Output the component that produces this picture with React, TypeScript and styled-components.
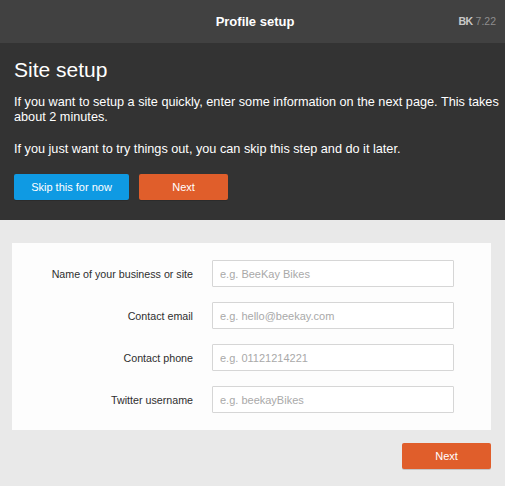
import React from "react";
import styled, { createGlobalStyle } from "styled-components";

const GlobalStyle = createGlobalStyle`
  html, body {
    margin: 0;
    padding: 0;
    background: #e9e9e9;
    font-family: "Liberation Sans", Arial, Helvetica, sans-serif;
  }
  * { box-sizing: border-box; }
`;

const Page = styled.div`
  width: 505px;
  min-height: 486px;
  background: #e9e9e9;
  display: flex;
  flex-direction: column;
`;

const TopBar = styled.header`
  height: 43px;
  background: #414141;
  display: grid;
  grid-template-columns: 1fr auto 1fr;
  align-items: center;
  padding: 0 9px 0 14px;
`;

const TopTitle = styled.h1`
  grid-column: 2;
  margin: 0;
  color: #ffffff;
  font-size: 13px;
  font-weight: bold;
  line-height: 1;
`;

const Version = styled.div`
  grid-column: 3;
  justify-self: end;
  font-size: 10.5px;
  color: #8e8e8e;
  margin-top: -2px;
  & b {
    color: #c9c9c9;
    font-weight: bold;
    margin-right: 3px;
    letter-spacing: -0.5px;
  }
`;

const Intro = styled.section`
  background: #333333;
  padding: 14px 4px 20px 14px;
  color: #ffffff;
`;

const IntroHeading = styled.h2`
  margin: 0 0 12px;
  font-size: 21px;
  font-weight: normal;
  line-height: 26px;
`;

const IntroText = styled.p`
  margin: 0 0 17px;
  font-size: 12.7px;
  line-height: 15px;
`;

const ButtonRow = styled.div`
  display: flex;
  gap: 10px;
  margin-top: 17px;
`;

const Button = styled.button<{ $tone: "blue" | "orange"; $width: number }>`
  width: ${(p) => p.$width}px;
  height: 26px;
  border: 0;
  border-radius: 2px;
  background: ${(p) => (p.$tone === "blue" ? "#0f9ae3" : "#e05e2b")};
  box-shadow: 0 1px 0 rgba(0, 0, 0, 0.15);
  color: #ffffff;
  font-family: inherit;
  font-size: 11px;
  padding: 0;
  cursor: pointer;
`;

const Body = styled.main`
  padding: 23px 14px 0 12px;
  display: flex;
  flex-direction: column;
  align-items: flex-end;
`;

const Card = styled.form`
  width: 479px;
  background: #fdfdfd;
  padding: 17px 0;
  display: grid;
  grid-template-columns: 200px 242px;
  row-gap: 15px;
  align-items: center;
`;

const Label = styled.label`
  text-align: right;
  padding-right: 19px;
  font-size: 10.7px;
  color: #2f2f2f;
`;

const Input = styled.input`
  width: 242px;
  height: 27px;
  border: 1px solid #d6d6d6;
  border-radius: 1px;
  padding: 0 7px;
  font-family: inherit;
  font-size: 11px;
  color: #333;
  background: #ffffff;
  &::placeholder {
    color: #a9a9a9;
  }
`;

const Footer = styled.div`
  margin-top: 13px;
`;

const fields = [
  { id: "name", label: "Name of your business or site", placeholder: "e.g. BeeKay Bikes" },
  { id: "email", label: "Contact email", placeholder: "e.g. hello@beekay.com" },
  { id: "phone", label: "Contact phone", placeholder: "e.g. 01121214221" },
  { id: "twitter", label: "Twitter username", placeholder: "e.g. beekayBikes" },
];

export default function App() {
  return (
    <Page>
      <GlobalStyle />
      <TopBar>
        <TopTitle>Profile setup</TopTitle>
        <Version>
          <b>BK</b>7.22
        </Version>
      </TopBar>
      <Intro>
        <IntroHeading>Site setup</IntroHeading>
        <IntroText>
          If you want to setup a site quickly, enter some information on the next page. This takes
          about 2 minutes.
        </IntroText>
        <IntroText>If you just want to try things out, you can skip this step and do it later.</IntroText>
        <ButtonRow>
          <Button type="button" $tone="blue" $width={115}>
            Skip this for now
          </Button>
          <Button type="button" $tone="orange" $width={89}>
            Next
          </Button>
        </ButtonRow>
      </Intro>
      <Body>
        <Card onSubmit={(e) => e.preventDefault()}>
          {fields.map((f) => (
            <React.Fragment key={f.id}>
              <Label htmlFor={f.id}>{f.label}</Label>
              <Input id={f.id} placeholder={f.placeholder} />
            </React.Fragment>
          ))}
        </Card>
        <Footer>
          <Button type="button" $tone="orange" $width={89}>
            Next
          </Button>
        </Footer>
      </Body>
    </Page>
  );
}
